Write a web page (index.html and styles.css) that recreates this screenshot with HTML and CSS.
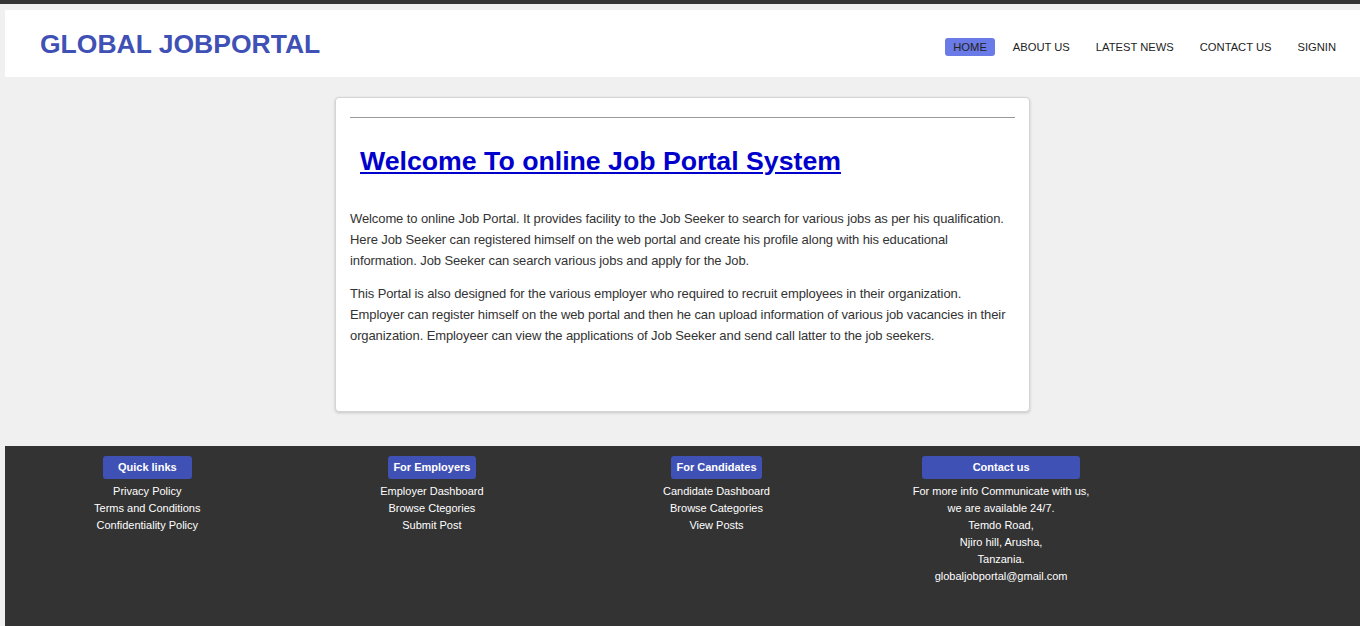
FILE: index.html
```html
<!DOCTYPE html>
<html lang="en">
<head>
<meta charset="utf-8">
<title>Global Jobportal</title>
<link rel="stylesheet" href="styles.css">
</head>
<body>
<div class="topbar"></div>
<div class="page">
  <header class="header">
    <div class="logo">GLOBAL JOBPORTAL</div>
    <nav class="nav">
      <a class="nav-item active" href="#">HOME</a>
      <a class="nav-item" href="#">ABOUT US</a>
      <a class="nav-item" href="#">LATEST NEWS</a>
      <a class="nav-item" href="#">CONTACT US</a>
      <a class="nav-item" href="#">SIGNIN</a>
    </nav>
  </header>

  <main class="main">
    <section class="card">
      <hr class="rule">
      <h1 class="title"><a href="#">Welcome To online Job Portal System</a></h1>
      <p class="text">Welcome to online Job Portal. It provides facility to the Job Seeker to search for various jobs as per his qualification. Here Job Seeker can registered himself on the web portal and create his profile along with his educational<br>information. Job Seeker can search various jobs and apply for the Job.</p>
      <p class="text">This Portal is also designed for the various employer who required to recruit employees in their organization. Employer can register himself on the web portal and then he can upload information of various job vacancies in their organization. Employeer can view the applications of Job Seeker and send call latter to the job seekers.</p>
    </section>
  </main>

  <footer class="footer">
    <div class="fcol">
      <div class="fbtn w-quick">Quick links</div>
      <div class="flinks">
        <a href="#">Privacy Policy</a>
        <a href="#">Terms and Conditions</a>
        <a href="#">Confidentiality Policy</a>
      </div>
    </div>
    <div class="fcol">
      <div class="fbtn w-emp">For Employers</div>
      <div class="flinks">
        <a href="#">Employer Dashboard</a>
        <a href="#">Browse Ctegories</a>
        <a href="#">Submit Post</a>
      </div>
    </div>
    <div class="fcol">
      <div class="fbtn w-cand">For Candidates</div>
      <div class="flinks">
        <a href="#">Candidate Dashboard</a>
        <a href="#">Browse Categories</a>
        <a href="#">View Posts</a>
      </div>
    </div>
    <div class="fcol">
      <div class="fbtn w-contact">Contact us</div>
      <div class="flinks">
        <span>For more info Communicate with us,</span>
        <span>we are available 24/7.</span>
        <span>Temdo Road,</span>
        <span>Njiro hill, Arusha,</span>
        <span>Tanzania.</span>
        <span>globaljobportal@gmail.com</span>
      </div>
    </div>
  </footer>
</div>
</body>
</html>
```

FILE: styles.css
```css
* { box-sizing: border-box; }

html, body {
  margin: 0;
  padding: 0;
}

body {
  background: #f0f0f0;
  font-family: "Liberation Sans", Arial, sans-serif;
  color: #333;
  overflow: hidden;
}

.topbar {
  height: 4px;
  background: #333;
}

.page {
  margin-left: 5px;
  padding-top: 6px;
}

.header {
  height: 67px;
  background: #fff;
  display: flex;
  align-items: center;
  justify-content: space-between;
  padding: 0 16px 0 35px;
}

.logo {
  font-size: 26.5px;
  font-weight: bold;
  color: #3f51b5;
  margin-top: 2px;
}

.nav {
  display: flex;
  gap: 10px;
  margin-top: 7px;
}

.nav-item {
  font-size: 11.2px;
  color: #222;
  text-decoration: none;
  padding: 0 8px;
  height: 18px;
  line-height: 18px;
  border-radius: 3px;
}

.nav-item.active {
  background: #6a7ae6;
}

.main {
  display: flex;
  justify-content: center;
  padding: 20px 0 34px;
}

.card {
  width: 695px;
  background: #fff;
  border: 1px solid #d4d4d4;
  border-radius: 4px;
  box-shadow: 0 1px 3px rgba(0, 0, 0, 0.18);
  padding: 19px 14px 53px;
}

.rule {
  margin: 0;
  border: 0;
  border-top: 1px solid #999;
  height: 0;
}

.title {
  margin: 28px 0 32px 10px;
  font-size: 26.7px;
  line-height: 30px;
  font-weight: bold;
}

.title a {
  color: #0000cc;
  text-decoration: underline;
}

.text {
  margin: 0 0 12px;
  font-size: 13px;
  line-height: 21px;
  letter-spacing: -0.1px;
  color: #333;
}

.footer {
  background: #333;
  height: 190px;
  padding-top: 10px;
  display: grid;
  grid-template-columns: repeat(4, 284.6px);
}

.fcol {
  display: flex;
  flex-direction: column;
  align-items: center;
}

.fbtn {
  height: 23px;
  line-height: 23px;
  background: #3f51b5;
  color: #fff;
  font-size: 11px;
  font-weight: bold;
  text-align: center;
  border-radius: 3px;
}

.w-quick { width: 89px; }
.w-emp { width: 88px; }
.w-cand { width: 91px; }
.w-contact { width: 158px; }

.flinks {
  margin-top: 4px;
  display: flex;
  flex-direction: column;
  align-items: center;
  font-size: 11px;
  line-height: 17px;
  color: #fff;
}

.flinks a,
.flinks span {
  color: #fff;
  text-decoration: none;
}
```
